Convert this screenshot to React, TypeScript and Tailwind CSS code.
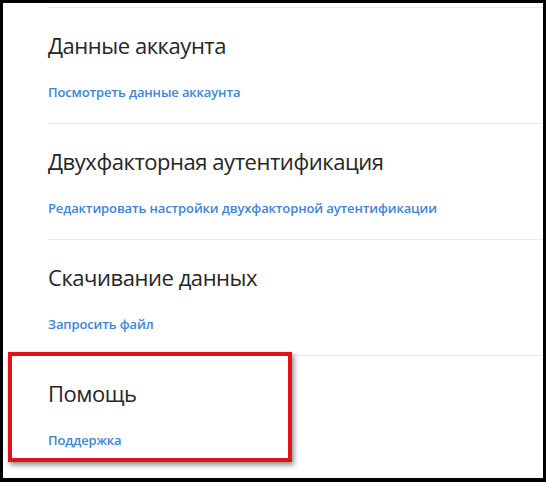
import React from 'react';

const sections = [
  { title: 'Данные аккаунта', link: 'Посмотреть данные аккаунта' },
  { title: 'Двухфакторная аутентификация', link: 'Редактировать настройки двухфакторной аутентификации' },
  { title: 'Скачивание данных', link: 'Запросить файл' },
  { title: 'Помощь', link: 'Поддержка' },
];

const App = () => {
  return (
    <div className="w-[546px] h-[482px] bg-black p-[3px] pb-[4px] font-['Open_Sans',sans-serif]">
      <div className="relative h-full bg-white pt-[4px] overflow-hidden">
        {sections.map((s) => (
          <div key={s.title} className="ml-[45px] h-[116px] border-t border-[#e9e9e9]">
            <h2 className="mt-[22px] text-[22px] leading-[30px] tracking-[-0.45px] font-normal text-[#262626]">
              {s.title}
            </h2>
            <a className="block mt-[23px] text-[13px] leading-[18px] tracking-[-0.12px] font-semibold text-[#3d85d6]">
              {s.link}
            </a>
          </div>
        ))}

        {/* highlight frame */}
        <div className="absolute left-[5px] top-[349px] w-[284px] h-[110px] border-[4px] border-[#e0131b] shadow-[2px_3px_5px_rgba(0,0,0,0.45)]" />
      </div>
    </div>
  );
};

export default App;
